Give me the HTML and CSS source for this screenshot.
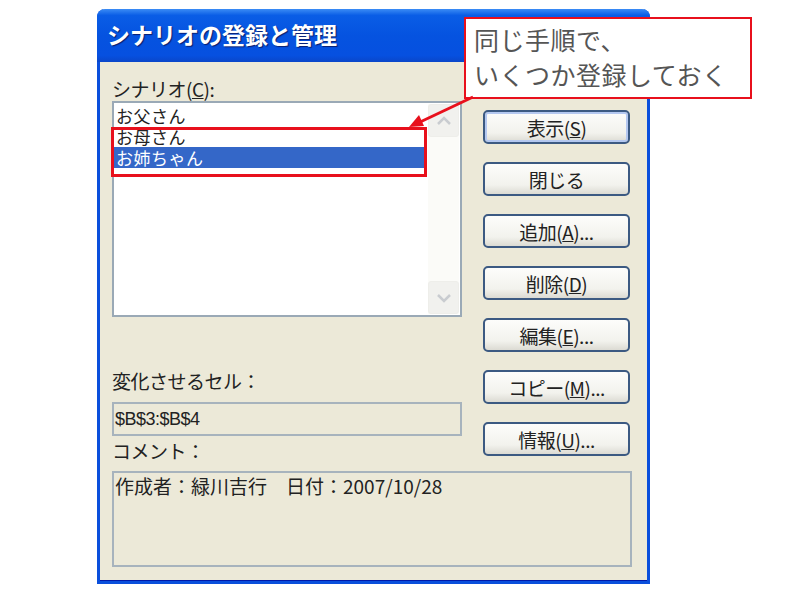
FILE: index.html
```html
<!DOCTYPE html>
<html lang="ja">
<head>
    <meta charset="UTF-8">
    <title>シナリオの登録と管理</title>
    <link rel="stylesheet" href="styles.css">
</head>
<body>
    <div class="page">
        <div class="dialog">
            <div class="titlebar">シナリオの登録と管理</div>
            <div class="client">
                <div class="top">
                    <div class="left">
                        <div class="label">シナリオ(<u>C</u>):</div>
                        <div class="listbox">
                            <ul class="items">
                                <li>お父さん</li>
                                <li>お母さん</li>
                                <li class="selected">お姉ちゃん</li>
                            </ul>
                            <div class="scrollbar">
                                <div class="sb-btn">
                                    <svg width="16" height="10" viewBox="0 0 16 10"><path d="M2 8 L8 2 L14 8" fill="none" stroke="#c9ccd0" stroke-width="2.5"/></svg>
                                </div>
                                <div class="sb-btn">
                                    <svg width="16" height="10" viewBox="0 0 16 10"><path d="M2 2 L8 8 L14 2" fill="none" stroke="#c9ccd0" stroke-width="2.5"/></svg>
                                </div>
                            </div>
                        </div>
                        <div class="label label-cells">変化させるセル：</div>
                        <div class="textbox">$B$3:$B$4</div>
                        <div class="label label-comment">コメント：</div>
                    </div>
                    <div class="buttons">
                        <button class="btn default">表示(<u>S</u>)</button>
                        <button class="btn">閉じる</button>
                        <button class="btn">追加(<u>A</u>)...</button>
                        <button class="btn">削除(<u>D</u>)</button>
                        <button class="btn">編集(<u>E</u>)...</button>
                        <button class="btn">コピー(<u>M</u>)...</button>
                        <button class="btn">情報(<u>U</u>)...</button>
                    </div>
                </div>
                <div class="comment">作成者：緑川吉行　日付：2007/10/28</div>
            </div>
        </div>

        <div class="highlight"></div>
        <div class="callout">同じ手順で、<br>いくつか登録しておく</div>
        <svg class="arrow" width="800" height="590" viewBox="0 0 800 590">
            <line x1="473" y1="97" x2="418" y2="123" stroke="#e8101c" stroke-width="3"/>
            <polygon points="409,127 424,126 419,115" fill="#e8101c"/>
        </svg>
    </div>
</body>
</html>
```

FILE: styles.css
```css
:root {
    --xp-face: #ECE9D8;
    --xp-blue: #0A4FDC;
    --field-border: #9AA9B6;
    --mark-red: #E8101C;
}

body {
    margin: 0;
    background: #fff;
    font-family: "Noto Sans CJK JP", "Liberation Sans", sans-serif;
    color: #000;
}

.page {
    position: relative;
    width: 800px;
    height: 590px;
    padding: 9px 0 0 97px;
    box-sizing: border-box;
}

.dialog {
    width: 553px;
    height: 575px;
    box-sizing: border-box;
    border: 3px solid var(--xp-blue);
    border-top: none;
    border-radius: 8px 8px 0 0;
    background: var(--xp-face);
    display: flex;
    flex-direction: column;
    box-shadow: inset 0 -1px 0 #0019a8;
}

.titlebar {
    height: 53px;
    margin: 0 -3px;
    padding: 8px 0 0 10px;
    box-sizing: border-box;
    border-radius: 8px 8px 0 0;
    background: linear-gradient(#3b8cf5 0%, #0a5de6 12%, #0553e0 50%, #0650e0 88%, #0a46c9 100%);
    color: #fff;
    font-size: 23px;
    font-weight: bold;
    text-shadow: 1px 1px 1px #0a1e6e;
}

.client {
    flex: 1;
    padding: 16px 15px 0 12px;
    display: flex;
    flex-direction: column;
}

.top {
    display: flex;
    gap: 21px;
}

.left {
    width: 350px;
    display: flex;
    flex-direction: column;
}

.label {
    height: 22px;
    line-height: 22px;
    font-size: 19px;
    color: #222;
    letter-spacing: -0.5px;
}

.listbox {
    margin-top: 1px;
    height: 216px;
    box-sizing: border-box;
    border: 2px solid var(--field-border);
    background: #fff;
    display: flex;
}

.items {
    list-style: none;
    margin: 0;
    padding: 2px 0 0 0;
    flex: 1;
}

.items li {
    height: 21px;
    line-height: 21px;
    font-size: 17px;
    padding-left: 2px;
    color: #222;
    letter-spacing: 0.5px;
}

.items li.selected {
    background: #3467c8;
    color: #fff;
}

.scrollbar {
    width: 31px;
    margin: 1px 1px 1px 2px;
    background: #fbfbf8;
    display: flex;
    flex-direction: column;
    justify-content: space-between;
}

.sb-btn {
    height: 31px;
    border-radius: 3px;
    background: #f1f1ee;
    border: 1px solid #eeeeea;
    display: flex;
    align-items: center;
    justify-content: center;
}

.label-cells {
    margin-top: 53px;
}

.textbox {
    margin-top: 10px;
    height: 34px;
    box-sizing: border-box;
    border: 2px solid #a7b3bd;
    padding-left: 1px;
    line-height: 30px;
    font-family: "Liberation Sans", sans-serif;
    font-size: 18px;
    letter-spacing: -0.5px;
    color: #222;
}

.label-comment {
    margin-top: 4px;
}

.buttons {
    width: 147px;
    padding-top: 32px;
    display: flex;
    flex-direction: column;
    gap: 18px;
}

.btn {
    height: 34px;
    box-sizing: border-box;
    border: 2px solid #3c5a82;
    border-radius: 5px;
    background: linear-gradient(#fdfdfb, #f2f2ed 70%, #dcdbd3);
    font-family: "Noto Sans CJK JP", sans-serif;
    font-size: 19px;
    color: #222;
    padding: 0;
    letter-spacing: -0.5px;
}

.btn.default {
    box-shadow: inset 0 0 0 2px #b4c8f0;
}

.comment {
    margin-top: 9px;
    height: 96px;
    box-sizing: border-box;
    border: 2px solid #a7b3bd;
    padding: 1px 0 0 1px;
    font-size: 19px;
    line-height: 24px;
    color: #222;
}

.highlight {
    position: absolute;
    left: 111px;
    top: 127px;
    width: 316px;
    height: 50px;
    box-sizing: border-box;
    border: 3px solid var(--mark-red);
}

.callout {
    position: absolute;
    left: 464px;
    top: 17px;
    width: 288px;
    height: 82px;
    box-sizing: border-box;
    border: 2px solid var(--mark-red);
    background: #fff;
    padding: 3px 0 0 8px;
    font-size: 25px;
    line-height: 35px;
    color: #555;
    letter-spacing: 0.5px;
}

.arrow {
    position: absolute;
    left: 0;
    top: 0;
    pointer-events: none;
}
```
